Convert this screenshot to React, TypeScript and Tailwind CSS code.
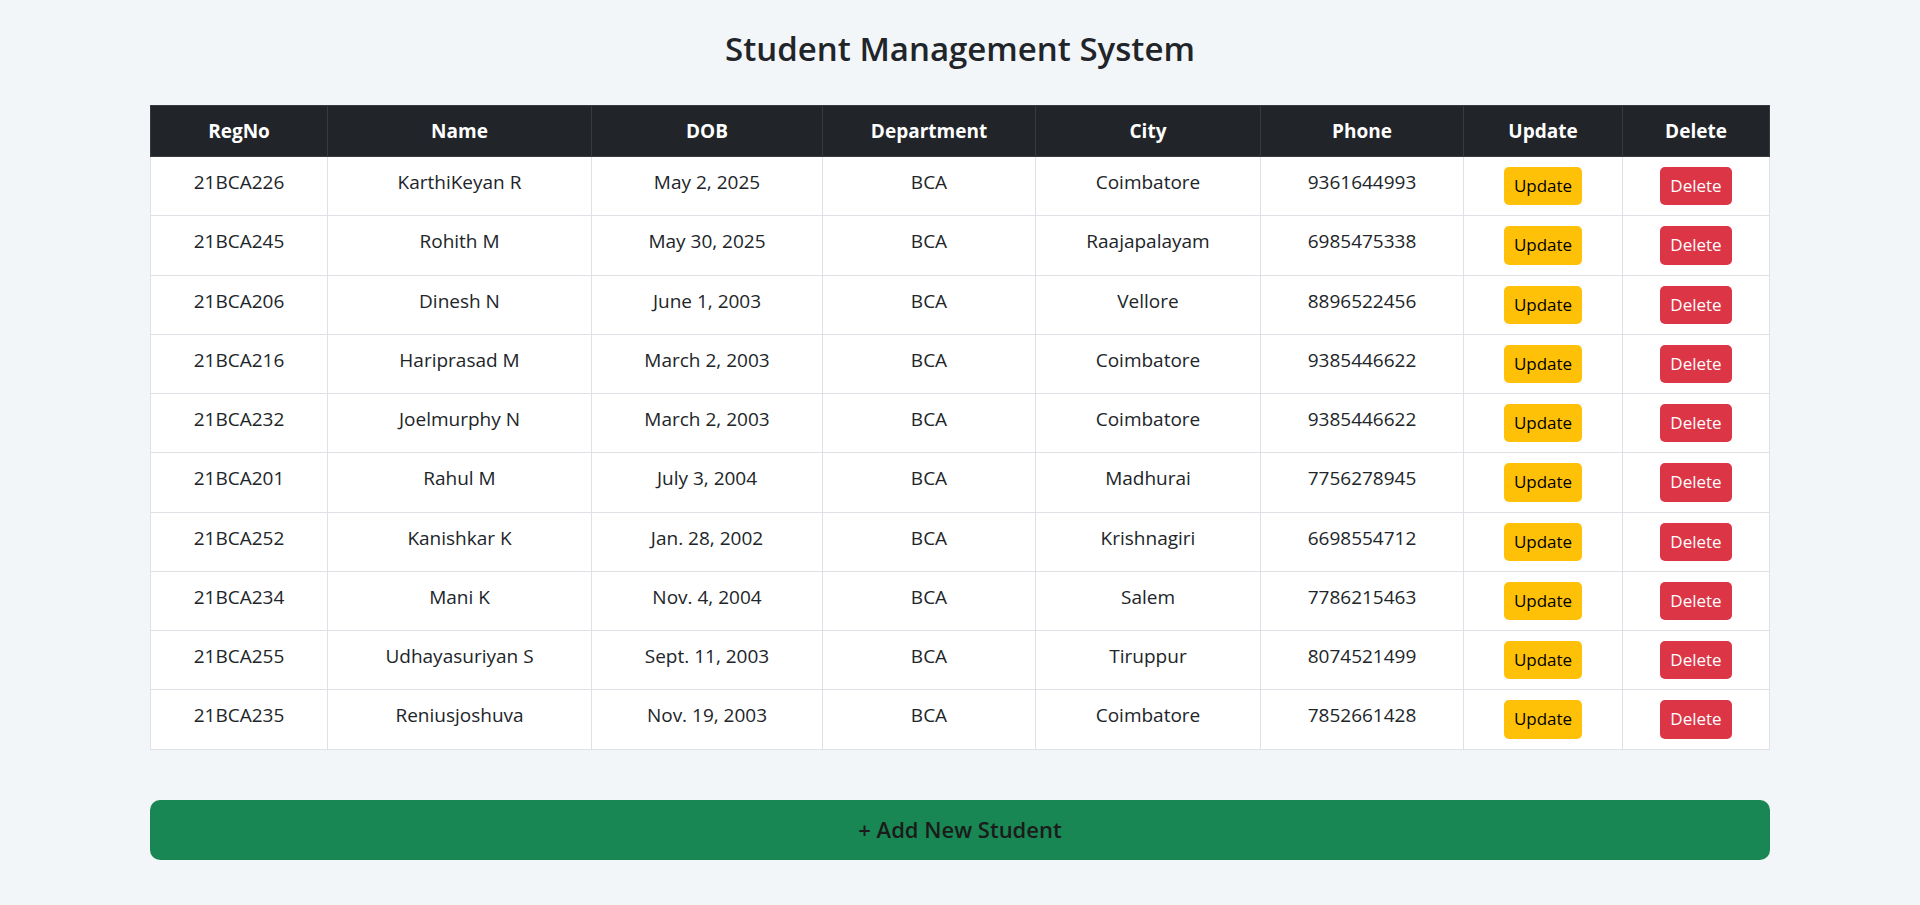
const students = [
  { reg: '21BCA226', name: 'KarthiKeyan R', dob: 'May 2, 2025', dept: 'BCA', city: 'Coimbatore', phone: '9361644993' },
  { reg: '21BCA245', name: 'Rohith M', dob: 'May 30, 2025', dept: 'BCA', city: 'Raajapalayam', phone: '6985475338' },
  { reg: '21BCA206', name: 'Dinesh N', dob: 'June 1, 2003', dept: 'BCA', city: 'Vellore', phone: '8896522456' },
  { reg: '21BCA216', name: 'Hariprasad M', dob: 'March 2, 2003', dept: 'BCA', city: 'Coimbatore', phone: '9385446622' },
  { reg: '21BCA232', name: 'Joelmurphy N', dob: 'March 2, 2003', dept: 'BCA', city: 'Coimbatore', phone: '9385446622' },
  { reg: '21BCA201', name: 'Rahul M', dob: 'July 3, 2004', dept: 'BCA', city: 'Madhurai', phone: '7756278945' },
  { reg: '21BCA252', name: 'Kanishkar K', dob: 'Jan. 28, 2002', dept: 'BCA', city: 'Krishnagiri', phone: '6698554712' },
  { reg: '21BCA234', name: 'Mani K', dob: 'Nov. 4, 2004', dept: 'BCA', city: 'Salem', phone: '7786215463' },
  { reg: '21BCA255', name: 'Udhayasuriyan S', dob: 'Sept. 11, 2003', dept: 'BCA', city: 'Tiruppur', phone: '8074521499' },
  { reg: '21BCA235', name: 'Reniusjoshuva', dob: 'Nov. 19, 2003', dept: 'BCA', city: 'Coimbatore', phone: '7852661428' },
]

const headers = ['RegNo', 'Name', 'DOB', 'Department', 'City', 'Phone', 'Update', 'Delete']

function App() {
  const th = 'border border-[#373b3e] py-[10px] px-[10px] leading-[30px] font-bold text-white'
  const td = 'border border-[#dee2e6] py-[10px] px-[10px] leading-[30px] align-top'

  return (
    <div className="min-h-screen bg-[#f3f6f9] px-[150px] pt-[28px] text-[#212529] font-['Segoe_UI','Open_Sans',sans-serif]">
      <h2 className="text-center text-[33px] leading-[42px] font-semibold mb-[35px]">Student Management System</h2>

      <table className="w-full table-fixed border-collapse text-center text-[19px] bg-white">
        <colgroup>
          <col className="w-[177px]" />
          <col className="w-[264px]" />
          <col className="w-[231px]" />
          <col className="w-[213px]" />
          <col className="w-[225px]" />
          <col className="w-[203px]" />
          <col className="w-[159px]" />
          <col className="w-[147px]" />
        </colgroup>
        <thead className="bg-[#212529]">
          <tr>
            {headers.map((h) => (
              <th key={h} className={th}>{h}</th>
            ))}
          </tr>
        </thead>
        <tbody>
          {students.map((s, i) => (
            <tr key={i}>
              <td className={td}>{s.reg}</td>
              <td className={td}>{s.name}</td>
              <td className={td}>{s.dob}</td>
              <td className={td}>{s.dept}</td>
              <td className={td}>{s.city}</td>
              <td className={td}>{s.phone}</td>
              <td className={td}>
                <button className="mx-auto block h-[38.25px] px-[10px] rounded-[5px] bg-[#ffc107] text-black text-[17px] leading-[26px]">
                  Update
                </button>
              </td>
              <td className={td}>
                <button className="mx-auto block h-[38.25px] px-[10px] rounded-[5px] bg-[#dc3545] text-white text-[17px] leading-[26px]">
                  Delete
                </button>
              </td>
            </tr>
          ))}
        </tbody>
      </table>

      <button className="mt-[50px] w-full h-[60px] rounded-[10px] bg-[#198754] text-[#1b1b1b] text-[22px] font-semibold">
        + Add New Student
      </button>
    </div>
  )
}

export default App
